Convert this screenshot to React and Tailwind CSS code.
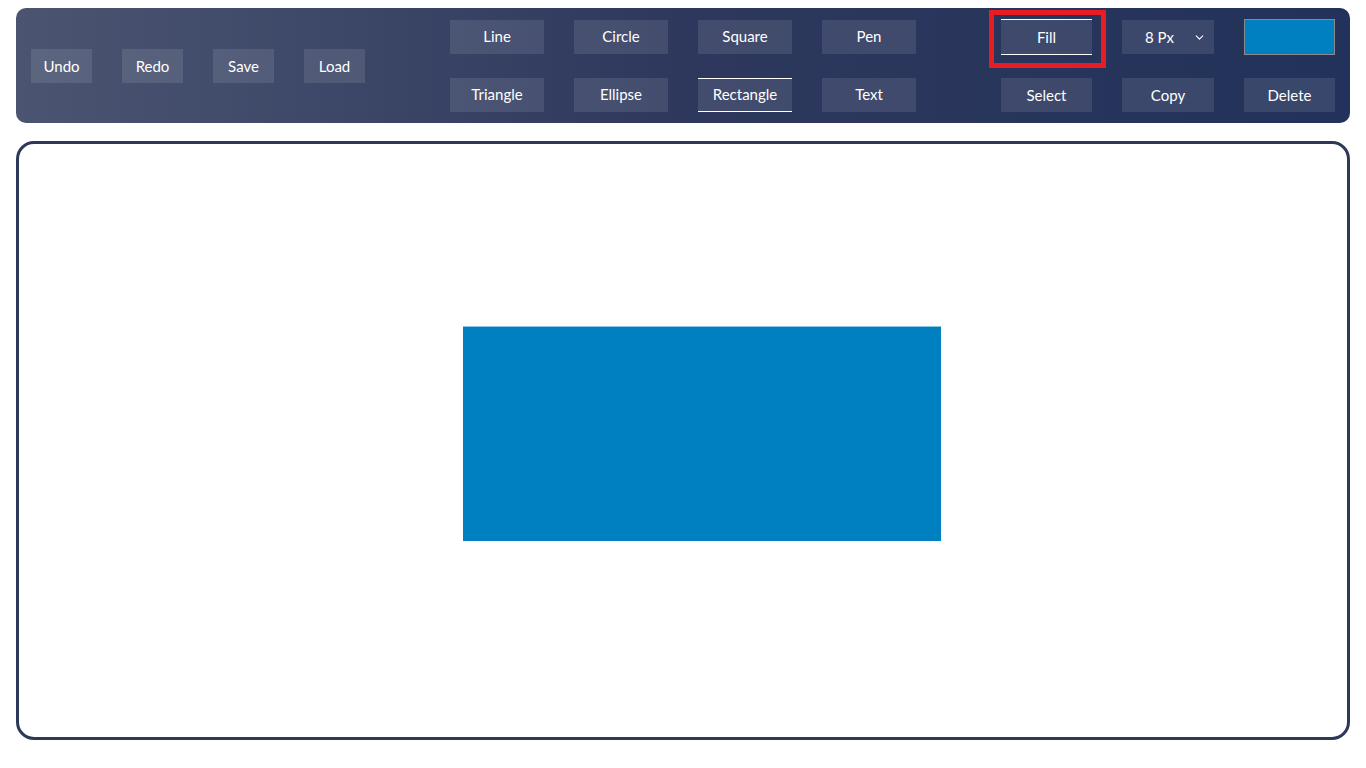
import { ChevronDown } from "lucide-react";

const tools = ["Line", "Circle", "Square", "Pen", "Triangle", "Ellipse", "Rectangle", "Text"];

function App() {
    return (
        <div className="min-h-screen bg-white px-4 pt-2 pb-7 font-['Lato',sans-serif] text-[15px] text-white">
            <div className="h-[115px] rounded-[10px] bg-linear-to-r from-[#4b5571] via-[#2e385d] to-[#22325a] px-[15px] flex items-center">
                <div className="flex gap-[30px] pt-px">
                    {["Undo", "Redo", "Save", "Load"].map((label) => (
                        <button key={label} className="w-[61px] h-[34px] bg-white/10 flex items-center justify-center pt-px">
                            {label}
                        </button>
                    ))}
                </div>

                <div className="ml-[85px] grid grid-cols-4 gap-x-[30px] gap-y-[24px]">
                    {tools.map((label) => (
                        <button
                            key={label}
                            className={
                                label === "Rectangle"
                                    ? "w-[94px] h-[34px] bg-white/10 flex items-center justify-center border-y border-white"
                                    : "w-[94px] h-[34px] bg-white/10 flex items-center justify-center"
                            }
                        >
                            {label}
                        </button>
                    ))}
                </div>

                <div className="ml-[85px] grid grid-cols-[91px_92px_91px] gap-x-[30px] gap-y-[23px]">
                    <div className="relative">
                        <button className="w-full h-[36px] bg-white/10 flex items-center justify-center border-y border-white">
                            Fill
                        </button>
                        <div className="absolute -left-[12px] -top-[9px] w-[117px] h-[58px] border-[5px] border-[#e81c24] pointer-events-none" />
                    </div>
                    <div className="h-[34px] mt-px bg-white/10 flex items-center pl-[23px] pr-[8px]">
                        <span className="flex-1">8 Px</span>
                        <ChevronDown size={13} strokeWidth={2} />
                    </div>
                    <div className="h-[36px] bg-[#0080c0] border border-[#8a8a8a]" />
                    <button className="h-[34px] bg-white/10 flex items-center justify-center">Select</button>
                    <button className="h-[34px] bg-white/10 flex items-center justify-center">Copy</button>
                    <button className="h-[34px] bg-white/10 flex items-center justify-center">Delete</button>
                </div>
            </div>

            <div className="mt-[18px] h-[599px] rounded-[18px] border-[3px] border-[#2c3a58] relative">
                <div className="absolute left-[444px] top-[182px] w-[478px] h-[215px] bg-[#0080c0] border-t border-[#8cc4e4]" />
            </div>
        </div>
    );
}

export default App;
